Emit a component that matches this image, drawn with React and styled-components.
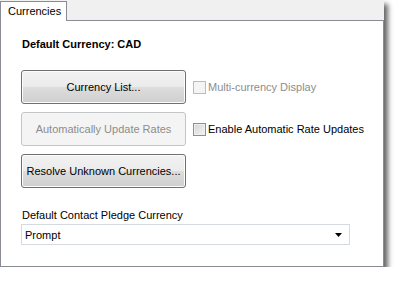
import styled, { createGlobalStyle } from 'styled-components';

const GlobalStyle = createGlobalStyle`
  html, body {
    margin: 0;
    padding: 0;
    background: #ffffff;
  }
  body {
    font-family: "Liberation Sans", Arial, sans-serif;
    font-size: 11px;
    color: #000;
  }
`;

const StyledWindow = styled.div`
  width: 384px;
  height: 267px;
  background-color: #f0f0f0;
  display: flex;
  flex-direction: column;
  box-shadow: 4px 4px 5px rgba(0, 0, 0, 0.6);
`;

const StyledTabStrip = styled.div`
  height: 20px;
  display: flex;
  align-items: flex-end;
`;

const StyledTab = styled.div`
  position: relative;
  z-index: 1;
  height: 20px;
  width: 67px;
  margin-bottom: -1px;
  box-sizing: border-box;
  background-color: #ffffff;
  border: 1px solid #898c95;
  border-bottom: none;
  padding: 2px 0 0 7px;
  line-height: 14px;
  font-size: 11px;
`;

const StyledPanel = styled.div`
  flex: 1;
  background-color: #ffffff;
  border: 1px solid #898c95;
  padding: 16px 0 0 20px;
  display: flex;
  flex-direction: column;
`;

const StyledTitle = styled.div`
  font-weight: bold;
  line-height: 14px;
  margin-left: 1px;
`;

const StyledActions = styled.div`
  margin-top: 19px;
  display: grid;
  grid-template-columns: 165px auto;
  column-gap: 7px;
  row-gap: 8px;
  align-items: center;
`;

const StyledButton = styled.button`
  height: 34px;
  width: 165px;
  box-sizing: border-box;
  border: 1px solid ${({ disabled }) => (disabled ? '#c3c5c7' : '#707070')};
  border-radius: 3px;
  font-family: "Liberation Sans", Arial, sans-serif;
  font-size: 11px;
  color: ${({ disabled }) => (disabled ? '#8d8d8d' : '#000')};
  background: ${({ disabled }) =>
    disabled
      ? '#f4f4f4'
      : 'linear-gradient(to bottom, #f2f2f2 0%, #ebebeb 49%, #dddddd 50%, #cfcfcf 100%)'};
  box-shadow: inset 0 0 0 1px ${({ disabled }) => (disabled ? '#f4f4f4' : '#fcfcfc')};
  padding: 0;
`;

const StyledCheckRow = styled.label`
  display: flex;
  align-items: center;
  gap: 2px;
  color: ${({ disabled }) => (disabled ? '#8d8d8d' : '#000')};
  line-height: 14px;
`;

const StyledCheckBox = styled.span`
  width: 13px;
  height: 13px;
  box-sizing: border-box;
  border: 1px solid ${({ disabled }) => (disabled ? '#bcbcbc' : '#8e8f8f')};
  background: ${({ disabled }) =>
    disabled ? '#f4f4f4' : 'linear-gradient(135deg, #d4d4d4 0%, #f4f4f4 100%)'};
  box-shadow: inset 0 0 0 1px ${({ disabled }) => (disabled ? '#f4f4f4' : '#f0f0f0')};
`;

const StyledFieldLabel = styled.div`
  margin-top: 20px;
  line-height: 14px;
  margin-left: 1px;
`;

const StyledSelect = styled.div`
  margin-top: 2px;
  width: 329px;
  height: 21px;
  box-sizing: border-box;
  border: 1px solid #d5dae0;
  background: #ffffff;
  display: flex;
  align-items: center;
  justify-content: space-between;
  padding: 0 4px 0 3px;
`;

const StyledCaret = styled.svg`
  width: 7px;
  height: 4px;
  margin-right: 3px;
`;

const CheckOption = ({ disabled, children }) => (
  <StyledCheckRow disabled={disabled}>
    <StyledCheckBox disabled={disabled} />
    {children}
  </StyledCheckRow>
);

export default function App() {
  return (
    <>
      <GlobalStyle />
      <StyledWindow>
        <StyledTabStrip>
          <StyledTab>Currencies</StyledTab>
        </StyledTabStrip>
        <StyledPanel>
          <StyledTitle>Default Currency: CAD</StyledTitle>
          <StyledActions>
            <StyledButton>Currency List...</StyledButton>
            <CheckOption disabled>Multi-currency Display</CheckOption>
            <StyledButton disabled>Automatically Update Rates</StyledButton>
            <CheckOption>Enable Automatic Rate Updates</CheckOption>
            <StyledButton>Resolve Unknown Currencies...</StyledButton>
            <span />
          </StyledActions>
          <StyledFieldLabel>Default Contact Pledge Currency</StyledFieldLabel>
          <StyledSelect>
            <span>Prompt</span>
            <StyledCaret viewBox="0 0 7 4">
              <path d="M0 0h7L3.5 4z" fill="#000" />
            </StyledCaret>
          </StyledSelect>
        </StyledPanel>
      </StyledWindow>
    </>
  );
}
